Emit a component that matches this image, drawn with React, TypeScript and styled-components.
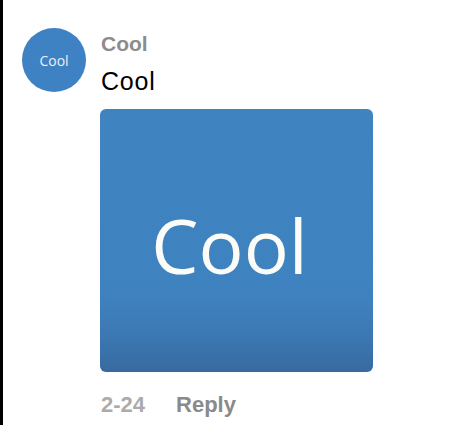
import React from "react";
import styled, { createGlobalStyle } from "styled-components";

const GlobalStyle = createGlobalStyle`
  html, body {
    margin: 0;
    padding: 0;
    background: #fff;
  }
  body {
    font-family: "Liberation Sans", Arial, sans-serif;
  }
`;

const Page = styled.div`
  width: 463px;
  height: 425px;
  box-sizing: border-box;
  border-left: 3px solid #000;
  background: #fff;
  overflow: hidden;
`;

const Comment = styled.div`
  display: flex;
  align-items: flex-start;
  gap: 15px;
  padding: 28px 0 0 19px;
`;

const Avatar = styled.div`
  width: 64px;
  height: 64px;
  flex-shrink: 0;
  border-radius: 50%;
  background: #3f82c4;
  color: #e8f0f8;
  display: flex;
  align-items: center;
  justify-content: center;
  font-family: "Open Sans", sans-serif;
  font-size: 14px;
`;

const Body = styled.div`
  display: flex;
  flex-direction: column;
`;

const Name = styled.div`
  font-size: 21px;
  font-weight: 700;
  color: #8c8c8c;
  line-height: 26px;
  margin-top: 3px;
`;

const Message = styled.div`
  font-size: 25px;
  color: #000;
  letter-spacing: 0.8px;
  line-height: 30px;
  margin-top: 9px;
`;

const Picture = styled.div`
  width: 273px;
  height: 263px;
  margin: 13px 0 0 -1px;
  border-radius: 6px;
  background: linear-gradient(
    to bottom,
    #3f83c1 0%,
    #3f82c0 70%,
    #3c79b4 85%,
    #386aa0 100%
  );
  display: flex;
  align-items: center;
  justify-content: center;
`;

const PictureText = styled.span`
  font-family: "Open Sans", sans-serif;
  font-size: 75px;
  color: #fbfbf8;
  margin: 8px 14px 0 0;
`;

const Footer = styled.div`
  display: flex;
  align-items: baseline;
  gap: 31px;
  margin-top: 20px;
  font-size: 22px;
  font-weight: 700;
  line-height: 26px;
`;

const Meta = styled.span<{ tone: string }>`
  color: ${(p) => p.tone};
`;

export default function App() {
  return (
    <>
      <GlobalStyle />
      <Page>
        <Comment>
          <Avatar>Cool</Avatar>
          <Body>
            <Name>Cool</Name>
            <Message>Cool</Message>
            <Picture>
              <PictureText>Cool</PictureText>
            </Picture>
            <Footer>
              <Meta tone="#ababab">2-24</Meta>
              <Meta tone="#8a8a8a">Reply</Meta>
            </Footer>
          </Body>
        </Comment>
      </Page>
    </>
  );
}
